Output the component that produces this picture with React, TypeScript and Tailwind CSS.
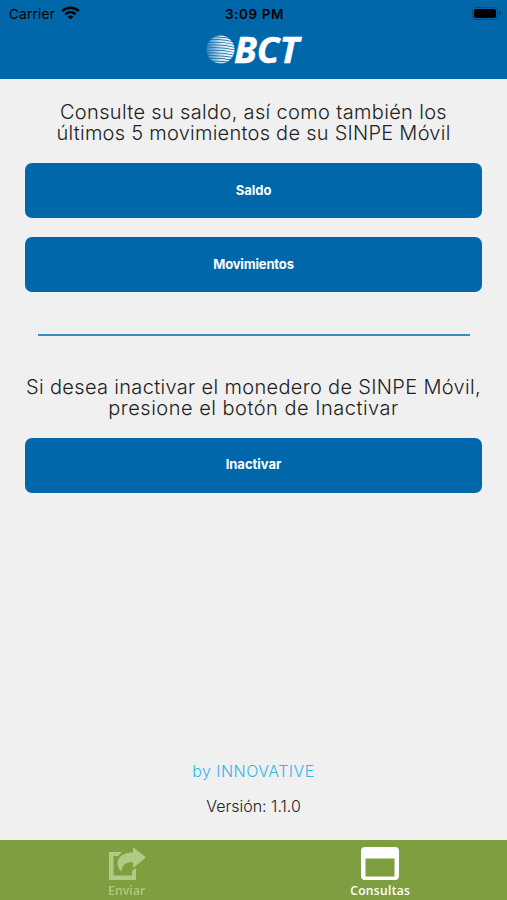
import type { ReactNode } from "react"

const stripes = [0, 1, 2, 3, 4, 5, 6, 7, 8, 9, 10]

const StatusBar = () => (
  <div className="grid h-7 grid-cols-3 items-center font-['Inter',sans-serif] text-black">
    <div className="flex items-center gap-[6px] pl-[9px] text-[13.5px]">
      <span className="tracking-[0.25px]">Carrier</span>
      <svg width="19" height="14" viewBox="0 0 19 14" fill="none" className="-mt-0.5">
        <path d="M1.2 5.1C6 .7 13 .7 17.8 5.1" stroke="#000" strokeWidth="2.6" />
        <path d="M4.3 8.3C7.4 5.6 11.6 5.6 14.7 8.3" stroke="#000" strokeWidth="2.4" />
        <path d="M9.5 13.4 6.6 10.6C8.2 9.2 10.8 9.2 12.4 10.6Z" fill="#000" />
      </svg>
    </div>
    <span className="pl-0.5 text-center text-[13.5px] font-semibold tracking-[0.6px]">3:09 PM</span>
    <div className="-mt-0.5 flex items-center justify-end gap-px pr-1.5">
      <div className="rounded-[4px] border border-[#004a78] p-px">
        <div className="h-[9px] w-[22px] rounded-[2px] bg-black" />
      </div>
      <div className="h-1 w-[2px] rounded-r-full bg-[#004a78]" />
    </div>
  </div>
)

const Logo = () => (
  <svg className="mx-auto mt-[5px] block overflow-visible" width="96" height="34" viewBox="0 0 96 34">
    <defs>
      <clipPath id="globe">
        <circle cx="14.5" cy="16.6" r="14" />
      </clipPath>
      <linearGradient id="fade" x1="0" x2="29" y1="0" y2="0" gradientUnits="userSpaceOnUse">
        <stop offset="0" stopColor="#fff" stopOpacity="0.2" />
        <stop offset="0.5" stopColor="#fff" stopOpacity="0.8" />
        <stop offset="1" stopColor="#fff" />
      </linearGradient>
    </defs>
    <g clipPath="url(#globe)" stroke="url(#fade)" strokeWidth="1.9" fill="none">
      {stripes.map((i) => (
        <path key={i} d={`M0 ${3.2 + i * 2.6}Q14 ${1 + i * 2.8} 29 ${5.2 + i * 2.6}`} />
      ))}
    </g>
    <text
      x="28"
      y="29.6"
      textLength="65"
      lengthAdjust="spacingAndGlyphs"
      fill="#fff"
      stroke="#fff"
      strokeWidth="0.5"
      className="font-['Open_Sans',sans-serif] text-[35px] font-bold italic"
    >
      BCT
    </text>
  </svg>
)

const ActionButton = ({ children }: { children: ReactNode }) => (
  <button className="block h-[55px] w-full rounded-[7px] bg-[#0067ab] text-[13px] font-bold text-white">
    {children}
  </button>
)

const App = () => {
  return (
    <div className="flex h-[900px] w-[507px] flex-col overflow-hidden bg-[#f0f0f0] font-['Inter',sans-serif] text-[#222]">
      <header className="h-[79px] shrink-0 bg-[#0067ab]">
        <StatusBar />
        <Logo />
      </header>

      <main className="flex flex-1 flex-col px-[25px] pt-[23px]">
        <p className="-mx-3 text-center text-[20px] leading-[21px] font-light">
          <span className="block tracking-[0.34px]">Consulte su saldo, así como también los</span>
          <span className="block tracking-[0.26px]">últimos 5 movimientos de su SINPE Móvil</span>
        </p>
        <div className="mt-[19px] flex flex-col gap-[19px]">
          <ActionButton>Saldo</ActionButton>
          <ActionButton>
            <span className="tracking-[-0.15px]">Movimientos</span>
          </ActionButton>
        </div>

        <div className="mx-[12.5px] mt-[42px] h-[1.5px] bg-[#3b8cc2]" />

        <p className="-mx-3 mt-[41px] mb-[19px] text-center text-[20px] leading-[21px] font-light">
          <span className="block tracking-[0.33px]">Si desea inactivar el monedero de SINPE Móvil,</span>
          <span className="block tracking-[0.5px]">presione el botón de Inactivar</span>
        </p>
        <ActionButton>Inactivar</ActionButton>

        <div className="mt-auto pb-[24px] text-center text-[16px] leading-[20px] font-light">
          <p className="tracking-[0.45px] text-[#32b5ea]">by INNOVATIVE</p>
          <p className="mt-[15px]">Versión: 1.1.0</p>
        </div>
      </main>

      <nav className="grid h-[60px] shrink-0 grid-cols-2 bg-[#7d9f3f] font-['Open_Sans',sans-serif] text-[12px] leading-[14px] font-semibold">
        <button className="flex flex-col items-center pt-[6px] text-[#b0cc83]">
          <svg width="38" height="36" viewBox="0 0 38 36" fill="currentColor">
            <path d="M1 6H14L10 10H5.5V29.5H24V25L28 22V34H1Z" />
            <path d="M25 1 38 11.5 25 22V16.5C18 15.5 14 19 13.5 26C5 16 11 6.5 25 6.5Z" />
          </svg>
          <span className="mt-[2px] tracking-[0.2px]">Enviar</span>
        </button>
        <button className="flex flex-col items-center pt-[7px] text-white">
          <svg width="38" height="34" viewBox="0 0 38 34" fill="currentColor" fillRule="evenodd">
            <path d="M4 0H34Q38 0 38 4V29Q38 33 34 33H4Q0 33 0 29V4Q0 0 4 0ZM4.5 11.5V29.5H33.5V11.5Z" />
          </svg>
          <span className="mt-[3px] tracking-[0.35px]">Consultas</span>
        </button>
      </nav>
    </div>
  )
}

export default App
